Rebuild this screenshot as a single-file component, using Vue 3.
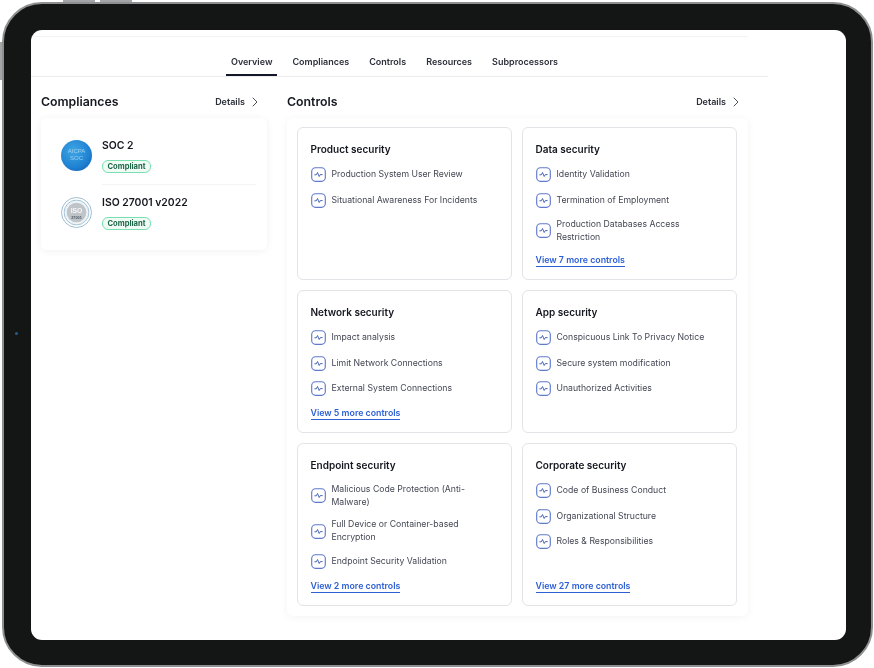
<script setup>
const tabs = ['Overview', 'Compliances', 'Controls', 'Resources', 'Subprocessors']

const groups = [
  { title: 'Product security', items: ['Production System User Review', 'Situational Awareness For Incidents'] },
  { title: 'Data security', items: ['Identity Validation', 'Termination of Employment', 'Production Databases Access Restriction'], more: 7 },
  { title: 'Network security', items: ['Impact analysis', 'Limit Network Connections', 'External System Connections'], more: 5 },
  { title: 'App security', items: ['Conspicuous Link To Privacy Notice', 'Secure system modification', 'Unauthorized Activities'] },
  { title: 'Endpoint security', items: ['Malicious Code Protection (Anti-Malware)', 'Full Device or Container-based Encryption', 'Endpoint Security Validation'], more: 2 },
  { title: 'Corporate security', items: ['Code of Business Conduct', 'Organizational Structure', 'Roles & Responsibilities'], more: 27 }
]
</script>

<template>
  <div class="device">
    <!-- hardware buttons and camera -->
    <span class="hw-btn top-a"></span>
    <span class="hw-btn top-b"></span>
    <span class="hw-btn side"></span>
    <span class="camera"></span>

    <div class="screen">
      <div class="page">
        <div class="top-strip"></div>

        <nav class="tabs">
          <a v-for="(tab, i) in tabs" :key="tab" class="tab" :class="{ active: i === 0 }">{{ tab }}</a>
        </nav>

        <div class="columns">
          <section class="col-left">
            <header class="section-head">
              <h2>Compliances</h2>
              <a class="details">
                Details
                <svg width="8" height="10" viewBox="0 0 8 10" fill="none">
                  <path d="M2 1l4 4-4 4" stroke="#4b4f5a" stroke-width="1" stroke-linecap="round" stroke-linejoin="round"/>
                </svg>
              </a>
            </header>

            <div class="compliance-card">
              <div class="compliance-row">
                <svg class="logo" width="31" height="31" viewBox="0 0 31 31">
                  <defs>
                    <radialGradient id="socBlue" cx="0.4" cy="0.35" r="0.75">
                      <stop offset="0" stop-color="#3fa6e4"/>
                      <stop offset="0.7" stop-color="#1f82d2"/>
                      <stop offset="1" stop-color="#1766b8"/>
                    </radialGradient>
                  </defs>
                  <circle cx="15.5" cy="15.5" r="15.5" fill="url(#socBlue)"/>
                  <text x="15.5" y="13" text-anchor="middle" font-size="6" fill="#9fd0f2">AICPA</text>
                  <text x="15.5" y="20" text-anchor="middle" font-size="6" fill="#9fd0f2">SOC</text>
                </svg>
                <div class="compliance-info">
                  <div class="compliance-name">SOC 2</div>
                  <span class="badge">Compliant</span>
                </div>
              </div>
              <div class="compliance-row">
                <svg class="logo" width="31" height="31" viewBox="0 0 31 31">
                  <circle cx="15.5" cy="15.5" r="15" fill="#fff" stroke="#86aec8" stroke-width="0.8"/>
                  <circle cx="15.5" cy="15.5" r="12.4" fill="#eef3f6" stroke="#9dbdd2" stroke-width="0.9"/>
                  <circle cx="15.5" cy="15.5" r="9.8" fill="#bfc4c9"/>
                  <text x="15.5" y="16" text-anchor="middle" font-size="6.8" font-weight="700" fill="#f6f7f8">ISO</text>
                  <text x="15.5" y="22" text-anchor="middle" font-size="3.8" font-weight="700" fill="#4a5560">27001</text>
                </svg>
                <div class="compliance-info">
                  <div class="compliance-name">ISO 27001 v2022</div>
                  <span class="badge">Compliant</span>
                </div>
              </div>
            </div>
          </section>

          <section class="col-right">
            <header class="section-head">
              <h2>Controls</h2>
              <a class="details">
                Details
                <svg width="8" height="10" viewBox="0 0 8 10" fill="none">
                  <path d="M2 1l4 4-4 4" stroke="#4b4f5a" stroke-width="1" stroke-linecap="round" stroke-linejoin="round"/>
                </svg>
              </a>
            </header>

            <div class="controls-panel">
              <div v-for="group in groups" :key="group.title" class="control-card">
                <h3>{{ group.title }}</h3>
                <ul>
                  <li v-for="item in group.items" :key="item">
                    <svg class="pulse" width="15" height="15" viewBox="0 0 15 15" fill="none">
                      <rect x="0.7" y="0.7" width="13.6" height="13.6" rx="3.8" stroke="#6079cc" stroke-width="1.15"/>
                      <path d="M3.8 7.8h1.5l1.2-2.3 1.7 4 1.1-1.9h1.9" stroke="#3f5db4" stroke-width="0.95" stroke-linecap="round" stroke-linejoin="round"/>
                    </svg>
                    <span>{{ item }}</span>
                  </li>
                </ul>
                <a v-if="group.more" class="more">View {{ group.more }} more controls</a>
              </div>
            </div>
          </section>
        </div>
      </div>
    </div>
  </div>
</template>

<style>
html, body {
  margin: 0;
  background: #fff;
}
</style>

<style scoped>
.device {
  position: relative;
  box-sizing: border-box;
  width: 871px;
  height: 665px;
  margin: 2px 0 0 2px;
  padding: 26px 25px 25px 27px;
  background: #141515;
  border: 2px solid #8d8f91;
  border-radius: 40px;
  font-family: Inter, "Liberation Sans", sans-serif;
  color: #14171f;
}

.hw-btn {
  position: absolute;
  background: #a3a5a7;
}
.hw-btn.top-a { top: -4px; left: 59px; width: 32px; height: 2px; }
.hw-btn.top-b { top: -4px; left: 96px; width: 32px; height: 2px; }
.hw-btn.side { top: 38px; left: -4px; width: 2px; height: 38px; }

.camera {
  position: absolute;
  top: 328px;
  left: 11px;
  width: 3px;
  height: 3px;
  border-radius: 50%;
  background: #2a5a86;
}

.screen {
  box-sizing: border-box;
  height: 610px;
  background: #fff;
  border-radius: 11px;
  overflow: hidden;
}

/* the source is a scaled-down image, slightly soft */
.page {
  width: 737px;
  filter: blur(0.3px);
}

.top-strip {
  width: 717px;
  height: 6px;
  border-bottom: 1px solid #f3f3f4;
}

.tabs {
  display: flex;
  gap: 10px;
  height: 39px;
  padding-left: 195px;
  border-bottom: 1px solid #ececee;
}

.tab {
  box-sizing: border-box;
  height: 39px;
  padding: 19px 5px 0;
  font-size: 9px;
  line-height: 12px;
  font-weight: 600;
  color: #2b2f3a;
  white-space: nowrap;
}

.tab.active {
  border-bottom: 2px solid #14172a;
}

.columns {
  display: flex;
  gap: 20px;
  padding: 0 20px 0 10px;
}

.col-left {
  width: 226px;
  flex: none;
}

.col-right {
  flex: 1;
}

.section-head {
  display: flex;
  align-items: center;
  justify-content: space-between;
  box-sizing: border-box;
  height: 41px;
  padding: 8px 8px 0 0;
}

.section-head h2 {
  margin: 0;
  font-size: 12.3px;
  line-height: 16px;
  font-weight: 600;
  color: #14171f;
}

.details {
  display: flex;
  align-items: center;
  gap: 6px;
  font-size: 9px;
  font-weight: 600;
  color: #2b2f3a;
}

.compliance-card {
  box-sizing: border-box;
  height: 132px;
  padding: 9px 11px 0 20px;
  border-radius: 6px;
  background: #fff;
  box-shadow: 0 1px 8px rgba(20, 24, 40, 0.06);
}

.compliance-row {
  display: flex;
  align-items: center;
  gap: 10px;
  height: 57px;
}

.compliance-row + .compliance-row {
  position: relative;
}

/* divider starts at the text column, not the logo */
.compliance-row + .compliance-row::before {
  content: '';
  position: absolute;
  top: 0;
  left: 41px;
  right: 0;
  height: 1px;
  background: #f4f4f6;
}

.logo {
  flex: none;
  margin-top: -1px;
  font-family: "Liberation Sans", sans-serif;
}

.compliance-info {
  padding-top: 1px;
}

.compliance-name {
  font-size: 10.4px;
  line-height: 14px;
  font-weight: 600;
  color: #14171f;
  margin-bottom: 7px;
}

.badge {
  display: block;
  box-sizing: border-box;
  width: 49px;
  height: 13px;
  border: 1px solid #78e0b0;
  border-radius: 6px;
  background: #f0fbf6;
  font-size: 7.6px;
  line-height: 11px;
  font-weight: 700;
  text-align: center;
  color: #1c6547;
}

.controls-panel {
  box-sizing: border-box;
  display: grid;
  grid-template-columns: 215px 215px;
  gap: 10.5px 10px;
  padding: 9px 11px 10px 10px;
  border-radius: 6px;
  background: #fff;
  box-shadow: 0 1px 8px rgba(20, 24, 40, 0.05);
}

.control-card {
  display: flex;
  flex-direction: column;
  box-sizing: border-box;
  padding: 13.5px 13px 12px 12.5px;
  border: 1px solid #e3e4e8;
  border-radius: 6px;
}

.control-card h3 {
  margin: 0 0 11px;
  font-size: 10px;
  line-height: 14px;
  font-weight: 600;
  color: #14171f;
}

.control-card ul {
  display: flex;
  flex-direction: column;
  gap: 9.5px;
  margin: 0 0 10px;
  padding: 0;
  list-style: none;
}

.control-card li {
  display: flex;
  align-items: center;
  gap: 5.5px;
  min-height: 16px;
  font-size: 8.7px;
  line-height: 13px;
  color: #434753;
}

.pulse {
  flex: none;
  margin-left: 0.5px;
}

.more {
  align-self: flex-start;
  margin-top: auto;
  font-size: 8.8px;
  line-height: 12px;
  font-weight: 600;
  color: #2c5fd4;
  border-bottom: 1px solid #2c5fd4;
}
</style>
